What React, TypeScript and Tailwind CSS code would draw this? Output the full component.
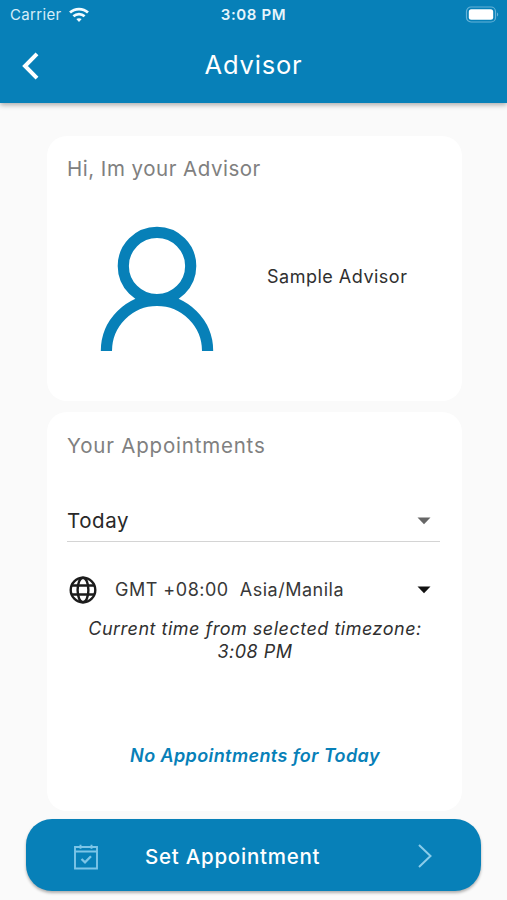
import type { ReactNode } from "react"

const CaretDown = ({ className }: { className: string }) => (
  <svg viewBox="0 0 14 8" className={className} fill="currentColor">
    <path d="M0.5 0.5h13L7 7.3z" />
  </svg>
)

function StatusBar() {
  return (
    <div className="grid h-[30px] grid-cols-3 items-center pl-[10px] pr-[8px] text-[15px]">
      <div className="flex items-center gap-[7px]">
        <span className="tracking-[0.35px] text-[#d5edf8]">Carrier</span>
        <svg viewBox="0 0 20 16" className="h-4 w-5" fill="none" stroke="#f2fbff" strokeWidth="2.7">
          <path d="M1 5.6C6 0.9 14 0.9 19 5.6" />
          <path d="M4.4 9.3c3.2-2.9 8-2.9 11.2 0" />
          <path d="M7.3 12.1c1.6-1.3 3.8-1.3 5.4 0L10 15z" fill="#f2fbff" stroke="none" />
        </svg>
      </div>
      <span className="-ml-[2px] text-center font-semibold tracking-[0.6px] text-[#e6f5fc]">3:08 PM</span>
      <svg viewBox="0 0 34 17" className="-mt-[2px] h-[17px] w-[34px] justify-self-end" fill="none">
        <rect x="1.5" y="1" width="29" height="15" rx="4.5" stroke="#65b2d8" strokeWidth="1.2" />
        <rect x="3.8" y="3.3" width="24.4" height="10.4" rx="2.5" fill="#fff" />
        <path d="M32 6.5c1.6.6 1.6 3.4 0 4z" fill="#65b2d8" />
      </svg>
    </div>
  )
}

function Header() {
  return (
    <header className="relative h-[103px] shrink-0 bg-[#0780b8] text-white shadow-[0_2px_5px_rgba(0,0,0,0.32)]">
      <StatusBar />
      <div className="grid h-[71px] grid-cols-[1fr_auto_1fr] items-center">
        <button className="ml-[22px] w-4" aria-label="Back">
          <svg viewBox="0 0 17 28" className="h-7 w-[17px]" fill="none" stroke="#fff" strokeWidth="4">
            <path d="M15 1.8L3 14l12 12.2" />
          </svg>
        </button>
        <h1 className="text-[25.5px] tracking-[0.8px]">Advisor</h1>
      </div>
    </header>
  )
}

interface CardProps {
  title: string
  className: string
  children: ReactNode
}

function Card({ title, className, children }: CardProps) {
  return (
    <section className={`rounded-[20px] bg-white pl-5 pr-[22px] ${className}`}>
      <h2 className="text-[20.5px] leading-[30px] text-[#808080]">{title}</h2>
      {children}
    </section>
  )
}

export default function App() {
  return (
    <div className="flex h-[900px] w-[507px] flex-col overflow-hidden bg-[#fafafa] font-['Inter',sans-serif] text-[#303030]">
      <Header />

      <main className="flex flex-col gap-[11px] pl-[47px] pr-[45px] pt-[33px]">
        <Card title="Hi, Im your Advisor" className="h-[265px] pt-[18px] tracking-[0.5px]">
          <div className="flex items-center pl-[33px] pt-[42px]">
            <svg viewBox="0 0 114 126" className="h-[126px] w-[114px]" fill="none" stroke="#0780b8" strokeWidth="11.2">
              <circle cx="57" cy="40" r="33.7" />
              <path d="M6.4 125c0-27.9 22.7-50.6 50.6-50.6s50.6 22.7 50.6 50.6" />
            </svg>
            <p className="-mt-[26px] ml-[53px] whitespace-nowrap text-[18px]">Sample Advisor</p>
          </div>
        </Card>

        <Card title="Your Appointments" className="h-[399px] pt-[19px] tracking-[0.8px]">
          <div className="mt-[37px] flex h-[44px] items-center justify-between border-b border-[#d4d4d4] pr-[9px]">
            <span className="pt-[3px] text-[20.5px] tracking-[0.6px] text-[#282828]">Today</span>
            <CaretDown className="mt-[2px] h-2 w-[14px] text-[#666]" />
          </div>

          <div className="mt-[33px] flex h-[30px] items-center pl-[2px] pr-[9px]">
            <svg viewBox="0 0 28 28" className="h-7 w-7" fill="none" stroke="#1c1c1c" strokeWidth="2.4">
              <circle cx="14" cy="14" r="12.3" />
              <ellipse cx="14" cy="14" rx="5.4" ry="12.3" />
              <path d="M2.8 9.5h22.4M2.8 18.5h22.4" />
            </svg>
            <span className="-mt-px ml-[18px] whitespace-pre text-[18px] tracking-[0.5px] text-[#383838]">
              {"GMT +08:00  Asia/Manila"}
            </span>
            <CaretDown className="ml-auto h-2 w-[14px] text-[#111]" />
          </div>

          <p className="mt-[12px] pl-[3px] text-center text-[18px] italic leading-[23px] tracking-[0.5px]">
            Current time from selected timezone:
            <br />
            3:08 PM
          </p>

          <p className="mt-[81px] pl-[3px] text-center text-[18px] font-semibold italic leading-[23px] tracking-[0.4px] text-[#0780b8]">
            No Appointments for Today
          </p>
        </Card>
      </main>

      <button className="ml-[26px] mt-2 flex h-[72px] w-[455px] shrink-0 items-center rounded-[26px] bg-[#0780b8] pl-12 pr-[49px] pt-[3px] text-white shadow-[0_2px_3px_rgba(0,0,0,0.3)]">
        <svg viewBox="0 0 24 26" className="h-[26px] w-6" fill="none" stroke="#7cc5e7" strokeWidth="1.9">
          <path d="M1 3h22v21.5H1zM1 7.5h22M6.5 0.8v4M17.5 0.8v4" />
          <path d="M7.5 15l3.5 3.4 6-6.2" strokeWidth="2.3" />
        </svg>
        <span className="ml-[47px] pt-[2px] text-[20.5px] font-medium tracking-[0.75px]">Set Appointment</span>
        <svg viewBox="0 0 14 24" className="-mt-px ml-auto h-6 w-[14px]" fill="none" stroke="#8accea" strokeWidth="2">
          <path d="M1 1l11.5 11L1 23" />
        </svg>
      </button>
    </div>
  )
}
